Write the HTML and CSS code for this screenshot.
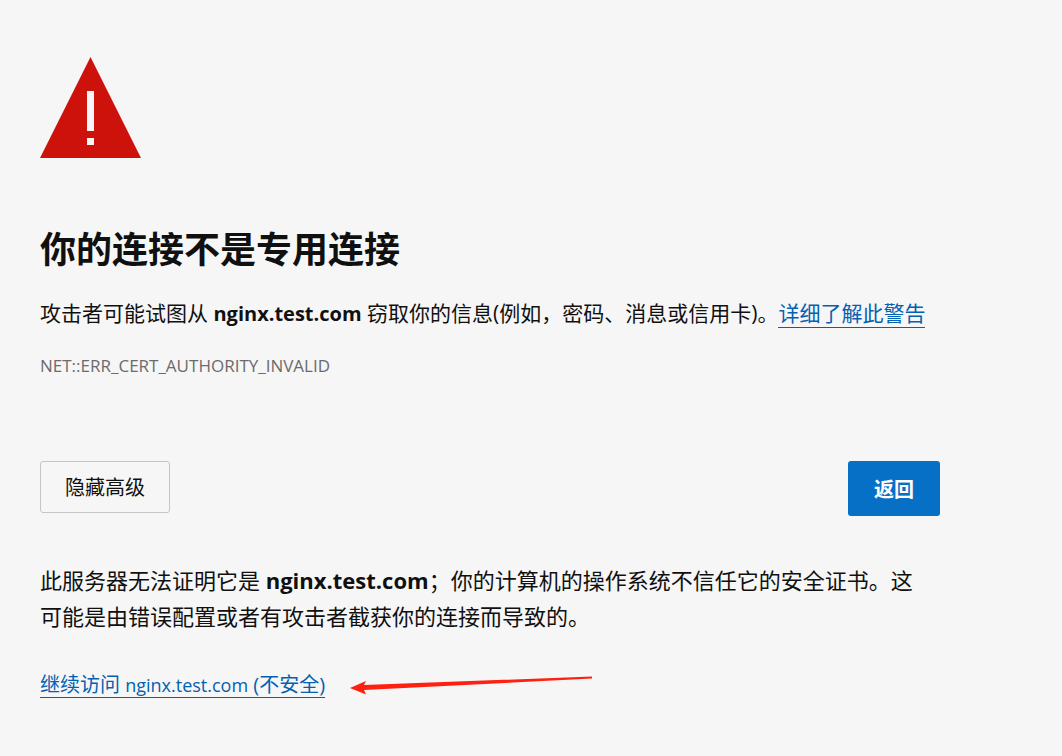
FILE: index.html
```html
<!DOCTYPE html>
<html lang="zh-CN">

<head>
  <meta charset="UTF-8">
  <meta name="viewport" content="width=device-width, initial-scale=1.0">
  <title>隐私错误</title>
  <link rel="stylesheet" href="styles.css">
</head>

<body>
  <main class="container">
    <svg class="warning-icon" viewBox="0 0 101 101" aria-hidden="true">
      <path d="M50.5 0L101 101H0z" fill="#cd120c" />
      <path d="M47 34h7v40h-7zM47 81h7v7h-7z" fill="#f6f6f6" />
    </svg>
    <h1>你的连接不是专用连接</h1>
    <p class="summary">攻击者可能试图从 <strong>nginx.test.com</strong> 窃取你的信息(例如，密码、消息或信用卡)。<a class="link" href="#">详细了解此警告</a></p>
    <div class="error-code">NET::ERR_CERT_AUTHORITY_INVALID</div>
    <div class="buttons">
      <button type="button" class="btn-details">隐藏高级</button>
      <button type="button" class="btn-primary">返回</button>
    </div>
    <p class="details">此服务器无法证明它是 <strong>nginx.test.com</strong>；你的计算机的操作系统不信任它的安全证书。这<br>可能是由错误配置或者有攻击者截获你的连接而导致的。</p>
    <div class="proceed">
      <a class="link" href="#">继续访问 <span class="host">nginx.test.com</span> (不安全)</a>
      <svg class="arrow" viewBox="0 0 243 20" aria-hidden="true">
        <path d="M0 12L16 5L14 9L242 0.5V2.5L14 14L16 18.500z" fill="#ff2010" />
      </svg>
    </div>
  </main>
</body>

</html>
```
FILE: styles.css
```css
* {
  box-sizing: border-box;
}

body {
  font-family: "Open Sans", "Noto Sans CJK SC", sans-serif;
  background-color: #f6f6f6;
  color: #101010;
  margin: 0;
  padding: 57px 40px 40px;
}

.container {
  max-width: 900px;
}

.warning-icon {
  display: block;
  width: 101px;
  height: 101px;
}

h1 {
  font-size: 36px;
  line-height: 48px;
  font-weight: bold;
  margin: 68px 0 23px;
}

.summary {
  font-size: 21px;
  line-height: 32px;
  margin: 0 0 24px;
}

.summary strong {
  font-size: 20px;
}

.link {
  color: #0461b1;
  text-decoration: none;
  border-bottom: 1px solid #0461b1;
}

.error-code {
  font-size: 17px;
  line-height: 24px;
  color: #6b6b6b;
}

.buttons {
  display: flex;
  justify-content: space-between;
  align-items: flex-start;
  margin: 83px 0 46px;
}

.buttons button {
  font-family: inherit;
  font-size: 20px;
  line-height: 28px;
  border-radius: 3px;
  cursor: pointer;
}

.btn-details {
  padding: 12px 24px 10px;
  color: #101010;
  background: transparent;
  border: 1px solid #c5c5c5;
}

.btn-primary {
  padding: 15px 26px 12px;
  color: #fff;
  background-color: #0670c6;
  border: none;
  font-weight: bold;
}

.details {
  font-size: 22px;
  line-height: 36px;
  margin: 0;
}

.proceed {
  display: flex;
  align-items: center;
  gap: 25px;
  margin-top: 39px;
  font-size: 20px;
  line-height: 24px;
}

.host {
  font-size: 18px;
}

.arrow {
  width: 243px;
  height: 20px;
}
```
